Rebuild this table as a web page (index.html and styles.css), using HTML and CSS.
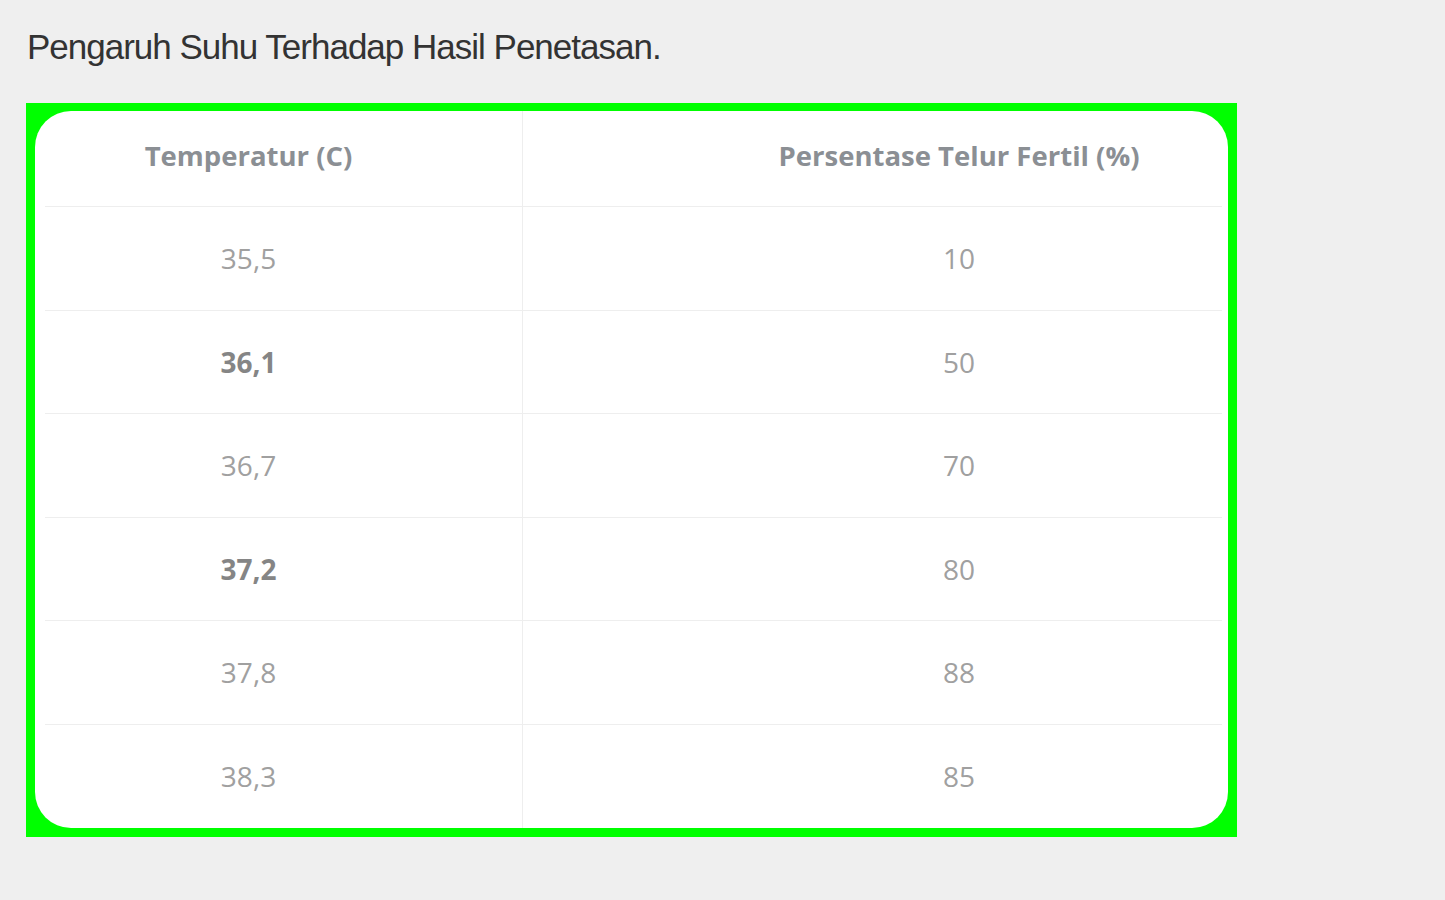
FILE: index.html
```html
<!DOCTYPE html>
<html lang="id">
<head>
<meta charset="utf-8">
<title>Pengaruh Suhu Terhadap Hasil Penetasan</title>
<link rel="stylesheet" href="styles.css">
</head>
<body>
<main class="page">
  <h1 class="title">Pengaruh Suhu Terhadap Hasil Penetasan.</h1>
  <div class="frame">
    <div class="card">
      <div class="grid">
        <div class="cell left head">Temperatur (C)</div>
        <div class="cell right head">Persentase Telur Fertil (%)</div>
        <div class="cell left">35,5</div>
        <div class="cell right">10</div>
        <div class="cell left strong">36,1</div>
        <div class="cell right">50</div>
        <div class="cell left">36,7</div>
        <div class="cell right">70</div>
        <div class="cell left strong">37,2</div>
        <div class="cell right">80</div>
        <div class="cell left">37,8</div>
        <div class="cell right">88</div>
        <div class="cell left last">38,3</div>
        <div class="cell right last">85</div>
      </div>
    </div>
  </div>
</main>
</body>
</html>
```
FILE: styles.css
```css
html, body {
  margin: 0;
  padding: 0;
  background: #efefef;
}
.page {
  padding: 27px 0 0 26px;
}
.title {
  margin: 0 0 36px 1px;
  font-family: "Liberation Sans", Arial, sans-serif;
  font-weight: normal;
  font-size: 35px;
  line-height: 40px;
  letter-spacing: -1px;
  color: #333333;
}
.frame {
  width: 1193px;
  padding: 8px 9px 9px 9px;
  background: #00ff00;
}
.card {
  background: #ffffff;
  border-radius: 36px;
  height: 717px;
  padding: 0 6px 0 10px;
  overflow: hidden;
}
.grid {
  display: grid;
  grid-template-columns: 478px 699px;
  grid-template-rows: 96px repeat(6, 103.5px);
  font-family: "Open Sans", "Noto Sans", sans-serif;
}
.cell {
  display: flex;
  align-items: center;
  justify-content: center;
  border-bottom: 1px solid #eeeeee;
  font-size: 28px;
  color: #a0a0a0;
}
.cell.last {
  border-bottom: none;
}
.left {
  padding-right: 70px;
  border-right: 1px solid #eeeeee;
}
.right {
  padding-left: 173px;
}
.head {
  font-weight: 700;
  font-size: 27.5px;
  color: #8b8f94;
  padding-bottom: 7px;
}
.strong {
  font-weight: 700;
  color: #858585;
}
```
